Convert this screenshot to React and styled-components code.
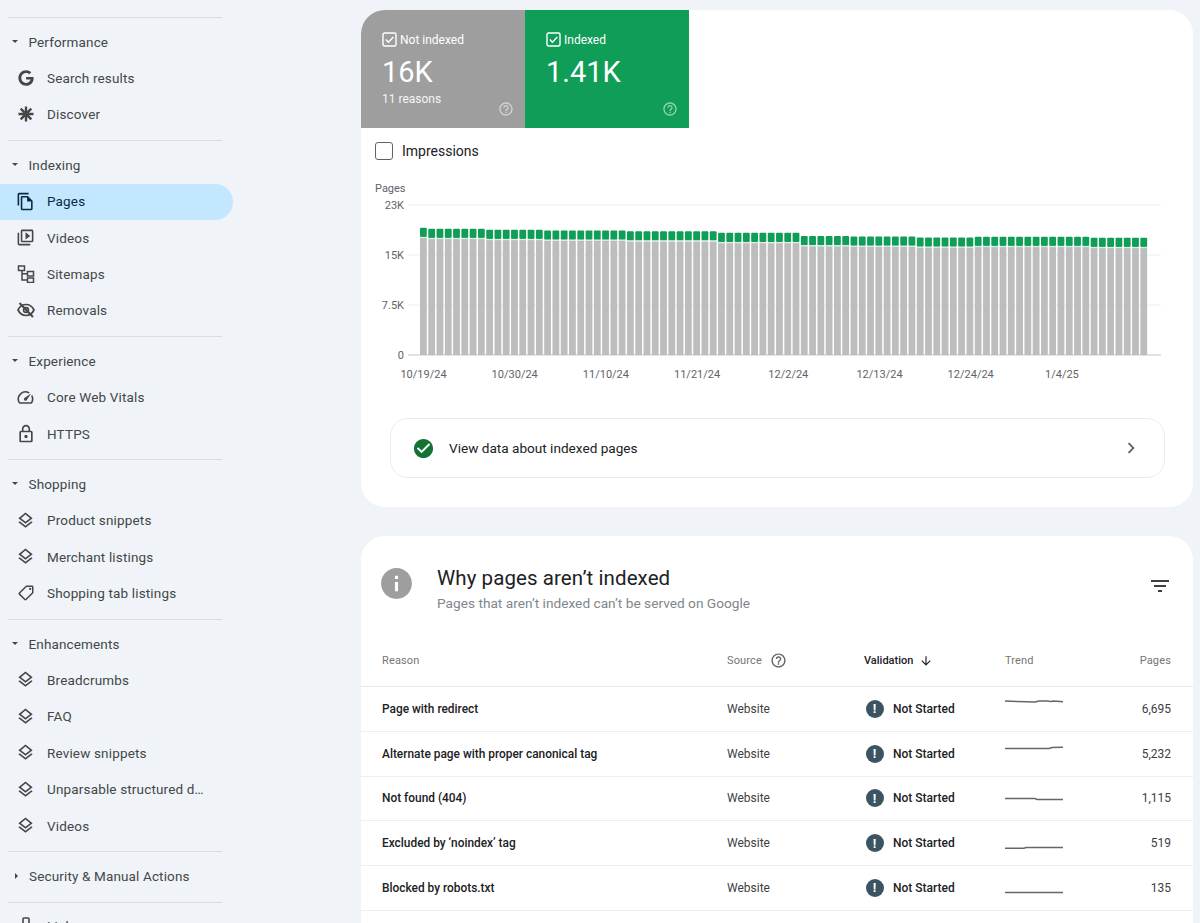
import styled, { createGlobalStyle } from 'styled-components';
import { FaGoogle } from 'react-icons/fa';
import {
  MdOutlineFileCopy,
  MdOutlineVideoLibrary,
  MdOutlineSpeed,
  MdOutlineLock,
  MdOutlineLayers,
  MdOutlineSell,
  MdHelpOutline,
  MdFilterList,
  MdArrowDownward,
  MdChevronRight,
  MdInfo,
  MdCheckCircle,
} from 'react-icons/md';

const GlobalStyle = createGlobalStyle`
  html, body {
    margin: 0;
    height: 923px;
    overflow: hidden;
    background: #f0f4f9;
    font-family: Roboto, "Liberation Sans", sans-serif;
  }
`;

// small drawn icons the packages don't have
const DiscoverIcon = () => (
  <svg width="18" height="18" viewBox="0 0 18 18" fill="none" stroke="currentColor" strokeWidth="2.4">
    <path d="M9 1.5v15M1.5 9h15M3.7 3.7l10.6 10.6M14.3 3.7L3.7 14.3" />
  </svg>
);

const SitemapIcon = () => (
  <svg width="18" height="18" viewBox="0 0 18 18" fill="none" stroke="currentColor" strokeWidth="1.5">
    <rect x="1.5" y="1" width="6" height="4.5" />
    <rect x="10.5" y="6.5" width="6" height="4.5" />
    <rect x="10.5" y="13" width="6" height="4.5" />
    <path d="M5 5.5V15h5.5M5 8.8h5.5" />
  </svg>
);

const RemovalsIcon = () => (
  <svg width="18" height="18" viewBox="0 0 18 18" fill="none" stroke="currentColor" strokeWidth="1.7">
    <path d="M1 9c1.8-3.6 4.6-5.5 8-5.5s6.2 1.9 8 5.5c-1.8 3.6-4.6 5.5-8 5.5S2.8 12.6 1 9z" />
    <circle cx="9" cy="9" r="2.4" />
    <path d="M2.5 2L16 16" strokeWidth="2" />
  </svg>
);

const LinksIcon = () => (
  <svg width="18" height="18" viewBox="0 0 18 18" fill="none" stroke="currentColor" strokeWidth="1.6">
    <rect x="6" y="1" width="6" height="14" rx="1" />
  </svg>
);

// the tag in the reference points the other way
const ShoppingTagIcon = () => (
  <MirroredIcon>
    <MdOutlineSell size={18} />
  </MirroredIcon>
);

const navGroups = [
  {
    title: 'Performance',
    items: [
      { label: 'Search results', icon: <FaGoogle size={16} /> },
      { label: 'Discover', icon: <DiscoverIcon /> },
    ],
  },
  {
    title: 'Indexing',
    items: [
      { label: 'Pages', icon: <MdOutlineFileCopy size={19} />, active: true },
      { label: 'Videos', icon: <MdOutlineVideoLibrary size={19} /> },
      { label: 'Sitemaps', icon: <SitemapIcon /> },
      { label: 'Removals', icon: <RemovalsIcon /> },
    ],
  },
  {
    title: 'Experience',
    items: [
      { label: 'Core Web Vitals', icon: <MdOutlineSpeed size={19} /> },
      { label: 'HTTPS', icon: <MdOutlineLock size={22} /> },
    ],
  },
  {
    title: 'Shopping',
    items: [
      { label: 'Product snippets', icon: <MdOutlineLayers size={19} /> },
      { label: 'Merchant listings', icon: <MdOutlineLayers size={19} /> },
      { label: 'Shopping tab listings', icon: <ShoppingTagIcon /> },
    ],
  },
  {
    title: 'Enhancements',
    items: [
      { label: 'Breadcrumbs', icon: <MdOutlineLayers size={19} /> },
      { label: 'FAQ', icon: <MdOutlineLayers size={19} /> },
      { label: 'Review snippets', icon: <MdOutlineLayers size={19} /> },
      { label: 'Unparsable structured data', icon: <MdOutlineLayers size={19} /> },
      { label: 'Videos', icon: <MdOutlineLayers size={19} /> },
    ],
  },
  { title: 'Security & Manual Actions', collapsed: true, items: [] },
];

const rows = [
  { reason: 'Page with redirect', pages: '6,695', trend: 'M0 7L12 7.5L30 8L34 7L42 7L46 7.6L48 7L52 7.2L58 7.8' },
  { reason: 'Alternate page with proper canonical tag', pages: '5,232', trend: 'M0 9.5L44 9.5L47 8.5L58 8.2' },
  { reason: 'Not found (404)', pages: '1,115', trend: 'M0 15.5L30 15.5L32 16.4L58 16.4' },
  { reason: 'Excluded by ‘noindex’ tag', pages: '519', trend: 'M0 20.3L19 20.3L21 19.6L58 19.6' },
  { reason: 'Blocked by robots.txt', pages: '135', trend: 'M0 19.5L58 19.5' },
  { reason: 'Soft 404', pages: '98', trend: 'M0 19.5L58 19.5' },
];

// top of the green part of each bar, in px from the top of the chart
const barTop = (i) => {
  if (i === 0) return 47.7;
  if (i < 8) return 48.7;
  if (i < 15) return 49.7;
  if (i < 25) return 50.5;
  if (i < 36) return 51.3;
  if (i < 46) return 52.8;
  if (i < 52) return 56;
  if (i < 60) return 56.6;
  if (i < 67) return 57.5;
  if (i < 81) return 56.7;
  return 57.7;
};

const bars = Array.from({ length: 88 }, (_, i) => i);
const yTicks = [
  { label: '23K', y: 25 },
  { label: '15K', y: 75 },
  { label: '7.5K', y: 125 },
  { label: '0', y: 175 },
];
const xTicks = ['10/19/24', '10/30/24', '11/10/24', '11/21/24', '12/2/24', '12/13/24', '12/24/24', '1/4/25'];

const Chart = () => (
  <ChartSvg width="832" height="204" viewBox="0 0 832 204">
    <AxisLabel x="14" y="12">Pages</AxisLabel>
    {yTicks.map((t) => (
      <g key={t.label}>
        <line x1="47" x2="800" y1={t.y} y2={t.y} stroke={t.y === 175 ? '#c4c7c5' : '#eceef0'} />
        <AxisLabel x="43" y={t.y + 4} textAnchor="end">{t.label}</AxisLabel>
      </g>
    ))}
    {bars.map((i) => {
      const x = 59 + i * 8.28;
      const top = barTop(i);
      return (
        <g key={i}>
          <rect x={x} y={top} width="6.8" height="9.2" rx="1" fill="#0f9d58" />
          <rect x={x} y={top + 9.2} width="6.8" height="1.2" fill="#d5efe0" />
          <rect x={x} y={top + 10.4} width="6.8" height={175 - top - 10.4} fill="#bdbdbd" />
        </g>
      );
    })}
    {xTicks.map((t, i) => (
      <AxisLabel key={t} x={62.5 + i * 91.2} y="197.5" textAnchor="middle">{t}</AxisLabel>
    ))}
  </ChartSvg>
);

const TileCheck = () => (
  <svg width="15" height="15" viewBox="0 0 15 15" fill="none" stroke="currentColor" strokeWidth="1.4">
    <rect x="1" y="1" width="13" height="13" rx="1.5" />
    <path d="M3.8 7.6l2.6 2.6 5-5.2" />
  </svg>
);

export default function App() {
  return (
    <Page>
      <GlobalStyle />
      <Sidebar>
        {navGroups.map((group) => (
          <NavGroup key={group.title}>
            <NavHead>
              <Caret $collapsed={group.collapsed} />
              {group.title}
            </NavHead>
            {group.items.map((item) => (
              <NavItem key={item.label} $active={item.active}>
                <NavIcon>{item.icon}</NavIcon>
                <NavLabel>{item.label}</NavLabel>
              </NavItem>
            ))}
          </NavGroup>
        ))}
        <NavGroup>
          <NavItem>
            <NavIcon><LinksIcon /></NavIcon>
            <NavLabel>Links</NavLabel>
          </NavItem>
        </NavGroup>
      </Sidebar>

      <Main>
        <Card>
          <Tiles>
            <Tile $color="#9e9e9e">
              <TileLabel><TileCheck />Not indexed</TileLabel>
              <TileValue>16K</TileValue>
              <TileNote>11 reasons</TileNote>
              <TileHelp><MdHelpOutline size={16} /></TileHelp>
            </Tile>
            <Tile $color="#0f9d58">
              <TileLabel><TileCheck />Indexed</TileLabel>
              <TileValue>1.41K</TileValue>
              <TileHelp><MdHelpOutline size={16} /></TileHelp>
            </Tile>
          </Tiles>
          <ImpressionsRow>
            <CheckBox />
            Impressions
          </ImpressionsRow>
          <Chart />
          <LinkCard>
            <CheckCircle><MdCheckCircle size={23} /></CheckCircle>
            View data about indexed pages
            <LinkChevron><MdChevronRight size={22} /></LinkChevron>
          </LinkCard>
        </Card>

        <Card>
          <ReasonHead>
            <InfoBadge><MdInfo size={37} /></InfoBadge>
            <div>
              <ReasonTitle>Why pages aren’t indexed</ReasonTitle>
              <ReasonSub>Pages that aren’t indexed can’t be served on Google</ReasonSub>
            </div>
            <FilterBtn><MdFilterList size={24} /></FilterBtn>
          </ReasonHead>
          <HeadRow>
            <span>Reason</span>
            <SourceHead>Source <MdHelpOutline size={17} /></SourceHead>
            <SortHead>Validation <MdArrowDownward size={14} /></SortHead>
            <span>Trend</span>
            <RightCell>Pages</RightCell>
          </HeadRow>
          {rows.map((row) => (
            <Row key={row.reason}>
              <ReasonCell>{row.reason}</ReasonCell>
              <span>Website</span>
              <StatusCell>
                <StatusDot>!</StatusDot>
                Not Started
              </StatusCell>
              <svg width="58" height="30" viewBox="0 0 58 30" fill="none" stroke="#666" strokeWidth="1.5">
                <path d={row.trend} />
              </svg>
              <RightCell>{row.pages}</RightCell>
            </Row>
          ))}
        </Card>
      </Main>
    </Page>
  );
}

const Page = styled.div`
  display: grid;
  grid-template-columns: 361px 832px;
  height: 923px;
  overflow: hidden;
`;

const Sidebar = styled.nav`
  width: 233px;
  padding-top: 17px;
`;

const NavGroup = styled.div`
  padding: 6px 0 7px;
  position: relative;
  &::before {
    content: '';
    display: block;
    height: 1px;
    width: 214px;
    margin: -6px 0 6px 8px;
    background: #d8dce2;
  }
`;

const NavHead = styled.div`
  display: flex;
  align-items: center;
  box-sizing: border-box;
  height: 36.4px;
  padding: 0 0 1px 12px;
  font-size: 13.5px;
  letter-spacing: 0.14px;
  color: #444746;
`;

const Caret = styled.span`
  width: 0;
  height: 0;
  margin-right: ${(p) => (p.$collapsed ? '11px' : '10.5px')};
  ${(p) =>
    p.$collapsed
      ? `margin-left: 3px;
         border-top: 3.5px solid transparent;
         border-bottom: 3.5px solid transparent;
         border-left: 3.5px solid #444746;`
      : `border-left: 3.5px solid transparent;
         border-right: 3.5px solid transparent;
         border-top: 3.5px solid #444746;`}
`;

const NavItem = styled.div`
  display: flex;
  align-items: center;
  box-sizing: border-box;
  height: 36.4px;
  padding: 0 0 1px 15.5px;
  font-size: 13.5px;
  letter-spacing: 0.16px;
  color: ${(p) => (p.$active ? '#0b2a3f' : '#444746')};
  background: ${(p) => (p.$active ? '#c2e7ff' : 'transparent')};
  border-radius: 0 18px 18px 0;
`;

const NavIcon = styled.span`
  display: flex;
  align-items: center;
  justify-content: center;
  width: 20px;
  margin-right: 11.5px;
  flex-shrink: 0;
`;

const MirroredIcon = styled.span`
  display: flex;
  transform: scaleX(-1);
`;

const NavLabel = styled.span`
  max-width: 161px;
  white-space: nowrap;
  overflow: hidden;
  text-overflow: ellipsis;
`;

const Main = styled.main`
  display: flex;
  flex-direction: column;
  gap: 29px;
  padding-top: 10px;
`;

const Card = styled.section`
  background: #fff;
  border-radius: 24px;
  overflow: hidden;
  flex-shrink: 0;
`;

const Tiles = styled.div`
  display: flex;
  height: 117.5px;
`;

const Tile = styled.div`
  position: relative;
  width: 164px;
  box-sizing: border-box;
  padding: 21px 0 0 21px;
  background: ${(p) => p.$color};
  color: #fff;
`;

const TileLabel = styled.div`
  display: flex;
  align-items: center;
  gap: 3px;
  height: 17px;
  font-size: 12px;
`;

const TileValue = styled.div`
  margin-top: 6px;
  font-size: 29px;
  line-height: 36px;
`;

const TileNote = styled.div`
  margin-top: 1px;
  font-size: 12px;
  line-height: 16px;
  opacity: 0.9;
`;

const TileHelp = styled.span`
  position: absolute;
  right: 11px;
  bottom: 11px;
  display: flex;
  opacity: 0.55;
`;

const ImpressionsRow = styled.div`
  display: flex;
  align-items: center;
  gap: 9px;
  height: 24px;
  margin: 11.5px 0 17px 14px;
  font-size: 14px;
  color: #202124;
`;

const CheckBox = styled.span`
  width: 18px;
  height: 18px;
  box-sizing: border-box;
  border: 1.6px solid #5f6368;
  border-radius: 3px;
`;

const ChartSvg = styled.svg`
  display: block;
`;

const AxisLabel = styled.text`
  font-size: 11px;
  font-family: Roboto, sans-serif;
  fill: #5f6368;
`;

const LinkCard = styled.div`
  display: flex;
  align-items: center;
  box-sizing: border-box;
  height: 60px;
  margin: 34px 28px 29px 29px;
  padding-left: 21px;
  border: 1px solid #e9ebed;
  border-radius: 18px;
  font-size: 13.6px;
  color: #202124;
`;

const CheckCircle = styled.span`
  display: flex;
  margin-right: 14px;
  color: #137333;
`;

const LinkChevron = styled.span`
  display: flex;
  margin-left: auto;
  margin-right: 22px;
  color: #5f6368;
`;

const ReasonHead = styled.div`
  display: flex;
  align-items: flex-start;
  box-sizing: border-box;
  height: 102.5px;
  padding: 28px 21px 0 17px;
`;

const InfoBadge = styled.span`
  display: flex;
  margin: 0 22px 0 0;
  padding-top: 1px;
  color: #9e9e9e;
`;

const ReasonTitle = styled.div`
  font-size: 20.5px;
  line-height: 28px;
  letter-spacing: 0.08px;
  color: #202124;
`;

const ReasonSub = styled.div`
  font-size: 13.7px;
  line-height: 22px;
  color: #80868b;
`;

const FilterBtn = styled.span`
  display: flex;
  margin: 10px 0 0 auto;
  color: #3c4043;
`;

const tableColumns = '345px 137px 141px 1fr';

const HeadRow = styled.div`
  display: grid;
  grid-template-columns: ${tableColumns} auto;
  align-items: center;
  box-sizing: border-box;
  height: 48.5px;
  padding: 0 22px 3px 21px;
  border-bottom: 1px solid #e6e8ea;
  font-size: 11px;
  letter-spacing: 0.15px;
  color: #757575;
`;

const SourceHead = styled.span`
  display: flex;
  align-items: center;
  gap: 8px;
  svg {
    color: #5f6368;
  }
`;

const SortHead = styled.span`
  display: flex;
  align-items: center;
  gap: 6px;
  font-weight: 500;
  letter-spacing: 0;
  color: #202124;
`;

const Row = styled.div`
  display: grid;
  grid-template-columns: ${tableColumns} auto;
  align-items: center;
  box-sizing: border-box;
  height: 44.75px;
  padding: 0 22px 0 21px;
  border-bottom: 1px solid #eceef0;
  font-size: 12px;
  color: #3c4043;
`;

const ReasonCell = styled.span`
  font-size: 11.9px;
  font-weight: 500;
  color: #202124;
`;

const StatusCell = styled.span`
  display: flex;
  align-items: center;
  gap: 9.5px;
  font-weight: 500;
  color: #202124;
`;

const StatusDot = styled.span`
  display: flex;
  align-items: center;
  justify-content: center;
  width: 18px;
  height: 18px;
  margin-left: 1.5px;
  border-radius: 50%;
  background: #3c5461;
  color: #fff;
  font-size: 13px;
  font-weight: 700;
`;

const RightCell = styled.span`
  text-align: right;
`;
